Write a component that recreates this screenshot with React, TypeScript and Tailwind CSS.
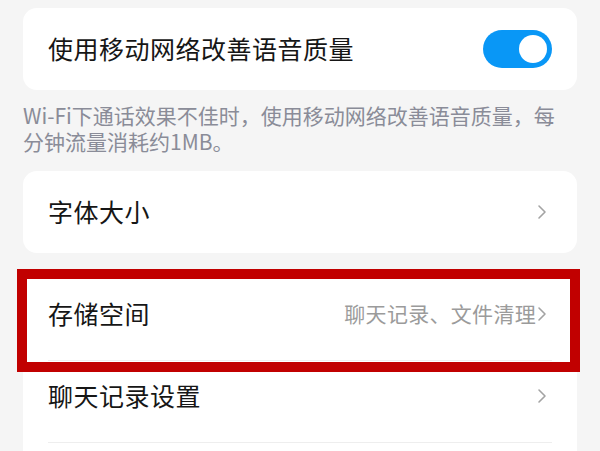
import React from 'react';

const FONT = '"Noto Sans CJK SC", "Noto Sans", sans-serif';

function Chevron() {
  return (
    <svg width="10" height="16" viewBox="0 0 10 16" className="shrink-0">
      <polyline points="2,2 8,8 2,14" fill="none" stroke="#a3a3a3" strokeWidth="1.6" strokeLinecap="round" strokeLinejoin="round" />
    </svg>
  );
}

function Toggle() {
  return (
    <div className="w-[69px] h-[38px] rounded-full bg-[#0997f6] flex items-center justify-end pr-[5px]">
      <div className="w-[28px] h-[28px] rounded-full bg-white" />
    </div>
  );
}

interface RowProps {
  label: string;
  hint?: string;
  divider?: boolean;
}

function Row({ label, hint, divider }: RowProps) {
  return (
    <div className={`mx-[25px] h-[82px] flex items-center justify-between pb-3 pr-[5px] ${divider ? 'border-b border-[#eeeeee]' : ''}`}>
      <span className="text-[25px] text-[#161616] tracking-[0.5px]">{label}</span>
      <div className="flex items-center gap-[1px]">
        {hint && <span className="text-[21px] tracking-[0.3px] text-[#9b9b9b]">{hint}</span>}
        <Chevron />
      </div>
    </div>
  );
}

export default function App() {
  return (
    <div className="w-[600px] h-[451px] overflow-hidden bg-[#f5f5f5]" style={{ fontFamily: FONT }}>
      <div className="pt-[8px] px-[23px]">
        {/* Wi-Fi voice quality toggle */}
        <div className="bg-white rounded-[14px] h-[82px] px-[25px] flex items-center justify-between">
          <span className="text-[25px] text-[#161616] tracking-[0.5px]">使用移动网络改善语音质量</span>
          <Toggle />
        </div>

        <p className="mt-[12px] text-[21px] leading-[26px] text-[#8a8c98]">
          Wi-Fi下通话效果不佳时，使用移动网络改善语音质量，每
          <br />
          分钟流量消耗约1MB。
        </p>

        {/* Font size */}
        <div className="mt-[17px] bg-white rounded-[14px] h-[82px] pl-[25px] pr-[30px] flex items-center justify-between">
          <span className="text-[25px] text-[#161616] tracking-[0.5px]">字体大小</span>
          <Chevron />
        </div>

        {/* Storage and chat history */}
        <div className="relative mt-[18px] bg-white rounded-t-[14px] pt-[8px] h-[300px]">
          <Row label="存储空间" hint="聊天记录、文件清理" divider />
          <Row label="聊天记录设置" divider />

          {/* highlight annotation */}
          <div className="absolute left-[-6px] top-[-2px] w-[563px] h-[103px] border-[10px] border-[#c10000] pointer-events-none" />
        </div>
      </div>
    </div>
  );
}
